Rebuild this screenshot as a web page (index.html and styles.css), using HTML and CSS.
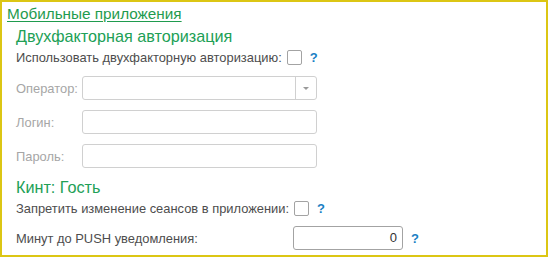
FILE: index.html
```html
<!DOCTYPE html>
<html lang="ru">
<head>
    <meta charset="UTF-8">
    <title>Мобильные приложения</title>
    <link rel="stylesheet" href="styles.css">
</head>
<body>
    <div class="frame">
        <div class="title">Мобильные приложения</div>
        <div class="section">
            <div class="section-title">Двухфакторная авторизация</div>
            <div class="row check-row">
                <span class="label">Использовать двухфакторную авторизацию:</span>
                <span class="checkbox"></span>
                <span class="help">?</span>
            </div>
            <div class="row field-row">
                <span class="label disabled field-label">Оператор:</span>
                <div class="input select">
                    <span class="select-btn"><span class="arrow"></span></span>
                </div>
            </div>
            <div class="row field-row">
                <span class="label disabled field-label">Логин:</span>
                <div class="input"></div>
            </div>
            <div class="row field-row">
                <span class="label disabled field-label">Пароль:</span>
                <div class="input"></div>
            </div>

            <div class="section-title second">Кинт: Гость</div>
            <div class="row check-row">
                <span class="label">Запретить изменение сеансов в приложении:</span>
                <span class="checkbox"></span>
                <span class="help">?</span>
            </div>
            <div class="row field-row push">
                <span class="label push-label">Минут до PUSH уведомления:</span>
                <div class="input number">0</div>
                <span class="help">?</span>
            </div>
        </div>
    </div>
</body>
</html>
```

FILE: styles.css
```css
body {
    margin: 0;
    font-family: "Liberation Sans", Arial, sans-serif;
    background-color: #ffffff;
}
.frame {
    width: 548px;
    height: 257px;
    box-sizing: border-box;
    border: 2px solid #dcc614;
    padding: 2px 0 0 5px;
}
.title {
    font-size: 15.3px;
    line-height: 19px;
    color: #1f9b4e;
    text-decoration: underline;
    text-underline-offset: 2px;
}
.section {
    padding-left: 9px;
}
.section-title {
    font-size: 16.2px;
    line-height: 20px;
    color: #21a056;
    margin-top: 3px;
}
.section-title.second {
    margin-top: 9px;
}
.row {
    display: flex;
    align-items: center;
}
.label {
    font-size: 12.9px;
    color: #4d4d4d;
}
.label.disabled {
    color: #a6a6a6;
}
.field-label {
    width: 66px;
    flex-shrink: 0;
}
.check-row {
    height: 18px;
    margin-top: 2px;
}
.checkbox {
    width: 13px;
    height: 13px;
    border: 1px solid #a3a3a3;
    border-radius: 2px;
    margin-left: 5px;
}
.help {
    color: #1b7fc4;
    font-weight: bold;
    font-size: 13px;
    margin-left: 8px;
}
.field-row {
    height: 24px;
    margin-top: 10px;
}
.input {
    width: 235px;
    height: 24px;
    box-sizing: border-box;
    border: 1px solid #d0d0d0;
    border-radius: 3px;
    background-color: #ffffff;
}
.select {
    display: flex;
    justify-content: flex-end;
}
.select-btn {
    width: 20px;
    border-left: 1px solid #d0d0d0;
    display: flex;
    align-items: center;
    justify-content: center;
}
.arrow {
    width: 0;
    height: 0;
    border-left: 3px solid transparent;
    border-right: 3px solid transparent;
    border-top: 3px solid #9a9a9a;
}
.push {
    margin-top: 9px;
}
.push-label {
    width: 277px;
    flex-shrink: 0;
}
.number {
    width: 110px;
    border-color: #a3a3a3;
    font-size: 13px;
    color: #333333;
    text-align: right;
    line-height: 22px;
    padding-right: 5px;
}
```
